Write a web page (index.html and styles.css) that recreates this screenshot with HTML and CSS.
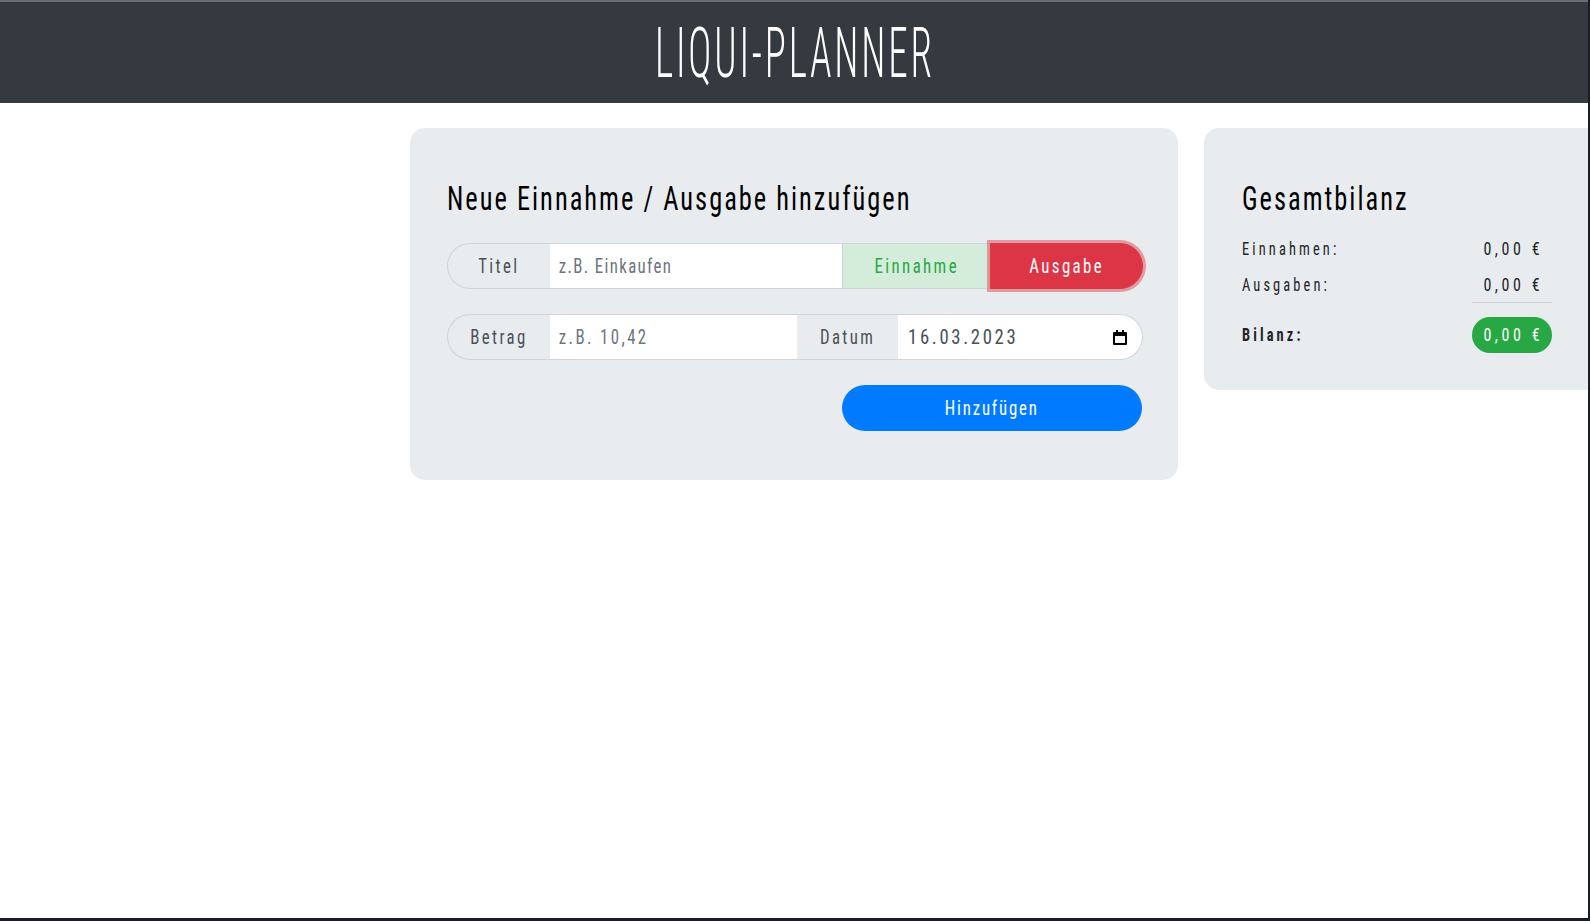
FILE: index.html
```html
<!DOCTYPE html>
<html lang="de">
<head>
<meta charset="utf-8">
<title>Liqui-Planner</title>
<link rel="stylesheet" href="styles.css">
</head>
<body>
<div class="page">
<header class="topbar">
  <h1 class="brand">LIQUI-PLANNER</h1>
</header>
<main class="layout">
  <section class="card card-form">
    <h3 class="card-title"><span class="sq sq-l">Neue Einnahme / Ausgabe hinzufügen</span></h3>
    <div class="input-group">
      <span class="ig-label"><span class="sq">Titel</span></span>
      <div class="ig-field ig-text"><input type="text" placeholder="z.B. Einkaufen"></div>
      <button class="ig-btn btn-in" type="button"><span class="sq">Einnahme</span></button>
      <button class="ig-btn btn-out" type="button"><span class="sq">Ausgabe</span></button>
    </div>
    <div class="input-group">
      <span class="ig-label"><span class="sq">Betrag</span></span>
      <div class="ig-field"><input type="text" placeholder="z.B. 10,42"></div>
      <span class="ig-label ig-mid"><span class="sq">Datum</span></span>
      <div class="ig-date">
        <span class="sq sq-l sq-num">16.03.2023</span>
        <svg class="cal" width="14" height="15" viewBox="0 0 14 15"><path fill="#000" fill-rule="evenodd" d="M3 0h2v2h4V0h2v2h2a1 1 0 0 1 1 1v11a1 1 0 0 1-1 1H1a1 1 0 0 1-1-1V3a1 1 0 0 1 1-1h2z M2 6v7h10V6z"/></svg>
      </div>
    </div>
    <div class="actions">
      <button class="btn-submit" type="button"><span class="sq">Hinzufügen</span></button>
    </div>
  </section>
  <aside class="card card-summary">
    <h3 class="card-title"><span class="sq sq-l">Gesamtbilanz</span></h3>
    <div class="sum-row"><span class="sum-key"><span class="sq sq-l">Einnahmen:</span></span><span class="sum-val"><span class="sq sq-r sq-num">0,00 €</span></span></div>
    <div class="sum-row"><span class="sum-key"><span class="sq sq-l">Ausgaben:</span></span><span class="sum-val sum-line"><span class="sq sq-r sq-num">0,00 €</span></span></div>
    <div class="sum-row sum-total"><span class="sum-key"><span class="sq sq-l">Bilanz:</span></span><span class="sum-val badge"><span class="sq sq-r sq-num">0,00 €</span></span></div>
  </aside>
</main>
</div>
</body>
</html>
```
FILE: styles.css
```css
html, body {
  margin: 0;
  padding: 0;
}
html {
  background: #1b1d26;
}
body {
  font-family: "Roboto", "Open Sans", sans-serif;
  font-stretch: 75%;
  color: #212529;
  height: 921px;
  overflow: hidden;
}
.page {
  width: 1588px;
  height: 918px;
  background: #fff;
  overflow: hidden;
}
.sq {
  display: inline-block;
  white-space: nowrap;
  transform: scaleX(0.8);
  transform-origin: center;
}
.sq-l { transform-origin: left center; }
.sq-r { transform-origin: right center; }
.sq.sq-num { transform: scaleX(0.89); }

.topbar {
  background: #343a40;
  border-top: 2px solid #6a6d71;
  height: 101px;
  display: flex;
  justify-content: center;
  align-items: center;
}
.brand {
  margin: 0 0 0 2px;
  color: #fff;
  font-family: "Roboto", sans-serif;
  font-stretch: 75%;
  font-weight: 300;
  font-size: 70px;
  letter-spacing: 5px;
  transform: scaleX(0.56);
}
.layout {
  display: flex;
  align-items: flex-start;
  gap: 26px;
  padding: 25px 0 0 410px;
}
.card {
  flex: none;
  background: #e9ecef;
  border-radius: 15px;
  box-sizing: border-box;
}
.card-form {
  width: 768px;
  padding: 51px 35px 49px 37px;
}
.card-summary {
  width: 420px;
  padding: 51px 72px 37px 38px;
}
.card-title {
  margin: 0 0 24px;
  font-size: 33px;
  font-weight: 400;
  line-height: 40px;
  letter-spacing: 2.5px;
  color: #000;
}
.input-group {
  display: flex;
  height: 46px;
  margin-bottom: 25px;
  font-size: 21px;
  letter-spacing: 3px;
}
.ig-label {
  width: 103px;
  flex: none;
  box-sizing: border-box;
  display: flex;
  align-items: center;
  justify-content: center;
  background: #e9ecef;
  color: #495057;
  border: 1px solid #ced4da;
  border-right: none;
  border-radius: 23px 0 0 23px;
}
.ig-mid {
  width: 101px;
  border-radius: 0;
  border-left: none;
}
.ig-field {
  flex: 1 1 0;
  min-width: 0;
  overflow: hidden;
  box-sizing: border-box;
  background: #fff;
  border-top: 1px solid #ced4da;
  border-bottom: 1px solid #ced4da;
}
.ig-field input {
  display: block;
  width: 125%;
  height: 100%;
  box-sizing: border-box;
  margin: 0;
  border: none;
  background: transparent;
  padding: 0 0 0 11px;
  font: inherit;
  letter-spacing: 3px;
  color: #495057;
  outline: none;
  transform: scaleX(0.8);
  transform-origin: left center;
}
.ig-text input {
  letter-spacing: 1.7px;
}
.ig-field input::placeholder {
  color: #6c757d;
  opacity: 1;
}
.ig-btn {
  flex: none;
  box-sizing: border-box;
  padding: 0;
  font: inherit;
  letter-spacing: 3px;
  cursor: pointer;
}
.btn-in {
  width: 148px;
  background: #d4edda;
  color: #28a745;
  border: 1px solid #ced4da;
  border-right: none;
}
.btn-out {
  width: 153px;
  background: #dc3545;
  color: #fff;
  border: 1px solid #dc3545;
  border-radius: 0 23px 23px 0;
  box-shadow: 0 0 0 3px rgba(220, 53, 69, 0.45);
}
.ig-date {
  flex: none;
  width: 245px;
  box-sizing: border-box;
  display: flex;
  align-items: center;
  justify-content: space-between;
  background: #fff;
  border: 1px solid #ced4da;
  border-left: none;
  border-radius: 0 23px 23px 0;
  padding: 0 15px 0 10px;
  color: #495057;
}
.cal { flex: none; }
.actions {
  display: flex;
  justify-content: flex-end;
}
.btn-submit {
  width: 300px;
  height: 46px;
  padding: 0;
  border: none;
  border-radius: 23px;
  background: #007bff;
  color: #fff;
  font: inherit;
  font-size: 21px;
  letter-spacing: 2.3px;
  margin-right: 1px;
  cursor: pointer;
}
.card-summary .card-title {
  margin-bottom: 12px;
}
.sum-row {
  display: flex;
  justify-content: space-between;
  align-items: center;
  font-size: 18px;
  letter-spacing: 3.9px;
  height: 36px;
  line-height: 36px;
}
.sum-val {
  width: 80px;
  height: 36px;
  box-sizing: border-box;
  text-align: right;
  padding-right: 9px;
  letter-spacing: 4px;
}
.sum-line {
  border-bottom: 1px solid #ced4da;
}
.sum-total {
  margin-top: 14px;
}
.sum-total .sum-key {
  font-weight: 700;
}
.badge {
  background: #28a745;
  color: #fff;
  border-radius: 18px;
}
```
